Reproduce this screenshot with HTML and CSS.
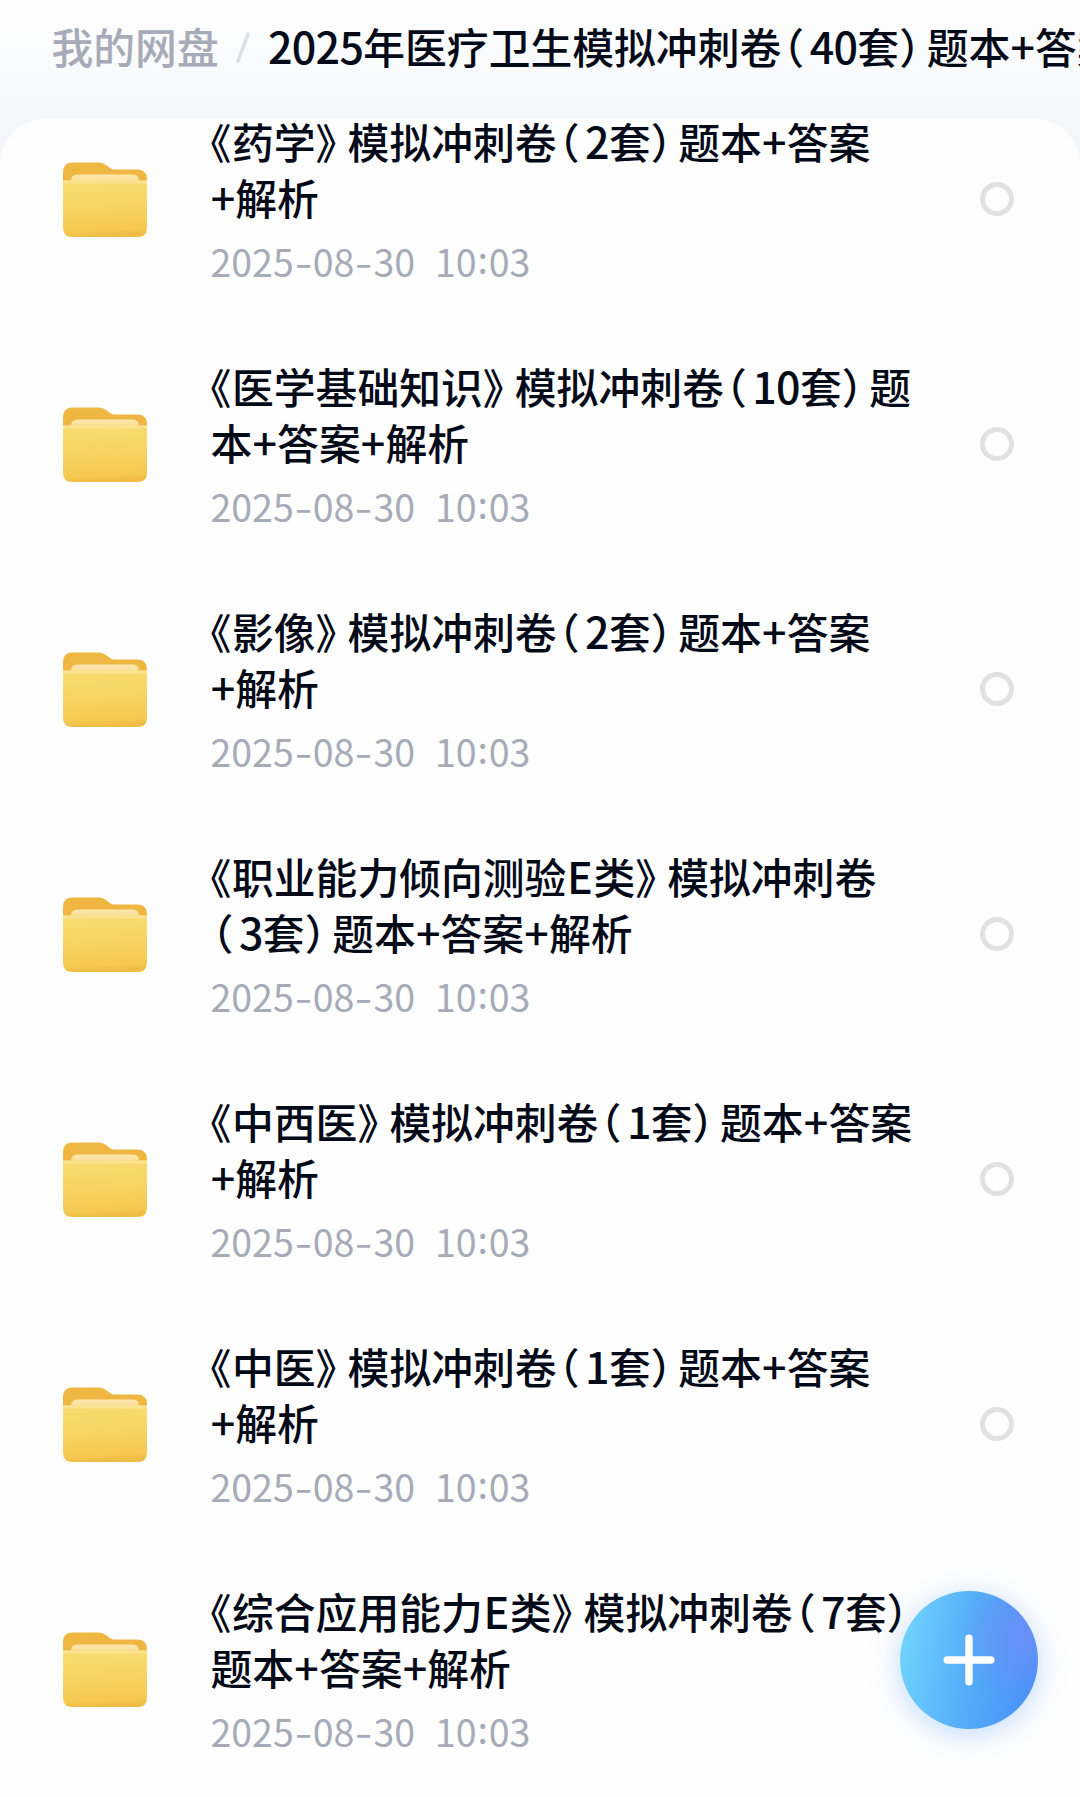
FILE: index.html
```html
<!DOCTYPE html>
<html lang="zh-CN">
<head>
<meta charset="utf-8">
<title>我的网盘</title>
<link rel="stylesheet" href="styles.css">
</head>
<body>
<svg class="defs" width="0" height="0" aria-hidden="true">
  <defs>
    <linearGradient id="back" x1="0" y1="0" x2="0" y2="1"><stop offset="0" stop-color="#efb843"/><stop offset="1" stop-color="#f0b23c"/></linearGradient>
    <linearGradient id="front" x1="0" y1="0" x2="0.08" y2="1"><stop offset="0" stop-color="#f8dc70"/><stop offset="0.5" stop-color="#f7d463"/><stop offset="0.92" stop-color="#f5c850"/><stop offset="1" stop-color="#efbd45"/></linearGradient>
    <linearGradient id="paper" x1="0" y1="0" x2="0" y2="1"><stop offset="0" stop-color="#fde8b0"/><stop offset="1" stop-color="#fad583"/></linearGradient>
    <symbol id="folder" viewBox="0 0 86 76">
      <path fill="url(#back)" d="M1 10Q1 .5 10.500 .5H37Q41 .5 44 3L48 6Q50 7.500 53 7.500H75Q85 7.500 85 17V40H1Z"/>
      <path fill="url(#paper)" d="M9 24V19Q9 12.500 15.500 12.500H71Q77 12.500 77 19V24Z"/>
      <path fill="url(#front)" d="M1 18.500H85V65.500Q85 75 75.500 75H10.500Q1 75 1 65.500Z"/>
      <path fill="#fae390" d="M1 18.500H85V21.500H1Z"/>
    </symbol>
  </defs>
</svg>
<div class="app">
  <nav class="crumbs">
    <span class="root">我的网盘</span>
    <svg class="slash" width="16" height="34" viewBox="0 0 16 34"><path d="M13 3L3 30" stroke="#dedfe1" stroke-width="3.500" stroke-linecap="round"/></svg>
    <span class="here"><span class="num">2025</span>年医疗卫生模拟冲刺卷<span class="lp">（</span><span class="num">40</span>套<span class="rp">）</span>题本<span class="plus">+</span>答案<span class="plus">+</span>解析</span>
  </nav>
  <main class="panel">
    <article class="row">
      <svg class="folder"><use href="#folder"/></svg>
      <div class="info">
        <h2 class="name"><span class="lq">《</span>药学<span class="rq">》</span>模拟冲刺卷<span class="lp">（</span><span class="num">2</span>套<span class="rp">）</span>题本<span class="plus">+</span>答案<br><span class="plus">+</span>解析</h2>
        <time class="date">2025<span class="dash">-</span>08<span class="dash">-</span>30<span class="gap"> </span>10<span class="colon">:</span>03</time>
      </div>
      <span class="check"></span>
    </article>
    <article class="row">
      <svg class="folder"><use href="#folder"/></svg>
      <div class="info">
        <h2 class="name"><span class="lq">《</span>医学基础知识<span class="rq">》</span>模拟冲刺卷<span class="lp">（</span><span class="num">10</span>套<span class="rp">）</span>题<br>本<span class="plus">+</span>答案<span class="plus">+</span>解析</h2>
        <time class="date">2025<span class="dash">-</span>08<span class="dash">-</span>30<span class="gap"> </span>10<span class="colon">:</span>03</time>
      </div>
      <span class="check"></span>
    </article>
    <article class="row">
      <svg class="folder"><use href="#folder"/></svg>
      <div class="info">
        <h2 class="name"><span class="lq">《</span>影像<span class="rq">》</span>模拟冲刺卷<span class="lp">（</span><span class="num">2</span>套<span class="rp">）</span>题本<span class="plus">+</span>答案<br><span class="plus">+</span>解析</h2>
        <time class="date">2025<span class="dash">-</span>08<span class="dash">-</span>30<span class="gap"> </span>10<span class="colon">:</span>03</time>
      </div>
      <span class="check"></span>
    </article>
    <article class="row">
      <svg class="folder"><use href="#folder"/></svg>
      <div class="info">
        <h2 class="name"><span class="lq">《</span>职业能力倾向测验<span class="latin">E</span>类<span class="rq">》</span>模拟冲刺卷<br><span class="lp">（</span><span class="num">3</span>套<span class="rp">）</span>题本<span class="plus">+</span>答案<span class="plus">+</span>解析</h2>
        <time class="date">2025<span class="dash">-</span>08<span class="dash">-</span>30<span class="gap"> </span>10<span class="colon">:</span>03</time>
      </div>
      <span class="check"></span>
    </article>
    <article class="row">
      <svg class="folder"><use href="#folder"/></svg>
      <div class="info">
        <h2 class="name"><span class="lq">《</span>中西医<span class="rq">》</span>模拟冲刺卷<span class="lp">（</span><span class="num">1</span>套<span class="rp">）</span>题本<span class="plus">+</span>答案<br><span class="plus">+</span>解析</h2>
        <time class="date">2025<span class="dash">-</span>08<span class="dash">-</span>30<span class="gap"> </span>10<span class="colon">:</span>03</time>
      </div>
      <span class="check"></span>
    </article>
    <article class="row">
      <svg class="folder"><use href="#folder"/></svg>
      <div class="info">
        <h2 class="name"><span class="lq">《</span>中医<span class="rq">》</span>模拟冲刺卷<span class="lp">（</span><span class="num">1</span>套<span class="rp">）</span>题本<span class="plus">+</span>答案<br><span class="plus">+</span>解析</h2>
        <time class="date">2025<span class="dash">-</span>08<span class="dash">-</span>30<span class="gap"> </span>10<span class="colon">:</span>03</time>
      </div>
      <span class="check"></span>
    </article>
    <article class="row">
      <svg class="folder"><use href="#folder"/></svg>
      <div class="info">
        <h2 class="name"><span class="lq">《</span>综合应用能力<span class="latin">E</span>类<span class="rq">》</span>模拟冲刺卷<span class="lp">（</span><span class="num">7</span>套<span class="rp">）</span><br>题本<span class="plus">+</span>答案<span class="plus">+</span>解析</h2>
        <time class="date">2025<span class="dash">-</span>08<span class="dash">-</span>30<span class="gap"> </span>10<span class="colon">:</span>03</time>
      </div>
    </article>
  </main>
  <button class="fab" aria-label="添加">
    <svg width="52" height="52" viewBox="0 0 52 52"><path d="M26 4.200V47.800M4.200 26H47.800" stroke="#fff" stroke-width="7.400" stroke-linecap="round"/></svg>
  </button>
</div>
</body>
</html>
```
FILE: styles.css
```css
* { box-sizing: border-box; }
body {
  margin: 0;
  font-family: "Noto Sans CJK SC", sans-serif;
  color: #040a18;
}
.defs { position: absolute; }
.app {
  position: relative;
  width: 1080px;
  height: 1797px;
  overflow: hidden;
  display: flex;
  flex-direction: column;
  background: linear-gradient(#fefefe 0, #f9fafc 75px, #f5f6fa 119px, #f5f6fa 100%);
}
.crumbs {
  flex: none;
  height: 119px;
  padding: 18px 0 0 51.5px;
  display: flex;
  align-items: flex-start;
  white-space: nowrap;
  font-size: 41.8px;
  line-height: 56px;
  font-weight: 500;
}
.root { color: #a7abb8; width: 182.500px; flex: none; }
.slash { flex: none; margin: 13px 17px 0 1px; fill: none; }
.here { flex: none; }
.panel {
  flex: 1;
  background: #fefefe;
  border-radius: 46px 46px 0 0;
  overflow: hidden;
}
.row {
  height: 245px;
  padding: 0 66px 0 62px;
  display: flex;
  align-items: flex-start;
}
.folder { flex: none; width: 86px; height: 76px; margin: 43px 62.500px 0 0; }
.info { flex: 1; white-space: nowrap; }
.name {
  margin: -5px 0 0;
  font-size: 41.8px;
  line-height: 55.500px;
  font-weight: 500;
}
.lq, .rq, .lp, .rp {
  display: inline-block;
  font-feature-settings: "halt" 1;
}
.lq { width: 21.500px; }
.rq { width: 32px; }
.lp { width: 28.500px; padding-left: 2px; }
.rp { width: 27.500px; }
.num { font-size: 43px; letter-spacing: -.7px; line-height: 1; }
.plus, .latin { display: inline-block; text-align: center; line-height: 1; }
.plus { width: 24.800px; font-size: 43px; }
.latin { width: 27px; font-size: 43px; }
.date {
  display: block;
  margin-top: 11px;
  font-size: 37.500px;
  line-height: 50px;
  color: #a7abb8;
}
.dash, .gap, .colon { display: inline-block; text-align: center; }
.dash { width: 19px; transform: scaleX(1.35); }
.gap { width: 20px; }
.colon { width: 12px; transform: translateY(-3px); }
.check {
  flex: none;
  width: 34px;
  height: 34px;
  margin-top: 63px;
  border: 5px solid #e1e1e1;
  border-radius: 50%;
}
.fab {
  position: absolute;
  left: 900px;
  top: 1591px;
  width: 138px;
  height: 138px;
  padding: 0;
  border: 0;
  border-radius: 50%;
  display: flex;
  align-items: center;
  justify-content: center;
  background:
    radial-gradient(circle at 90% 32%, rgba(108, 143, 247, .9) 0, rgba(108, 143, 247, 0) 42%),
    linear-gradient(98deg, #6fd3fd 5%, #55adf8 50%, #4a93f8 90%);
  box-shadow: 0 5px 30px rgba(80, 155, 250, .36);
}
.fab svg { fill: none; }
```
